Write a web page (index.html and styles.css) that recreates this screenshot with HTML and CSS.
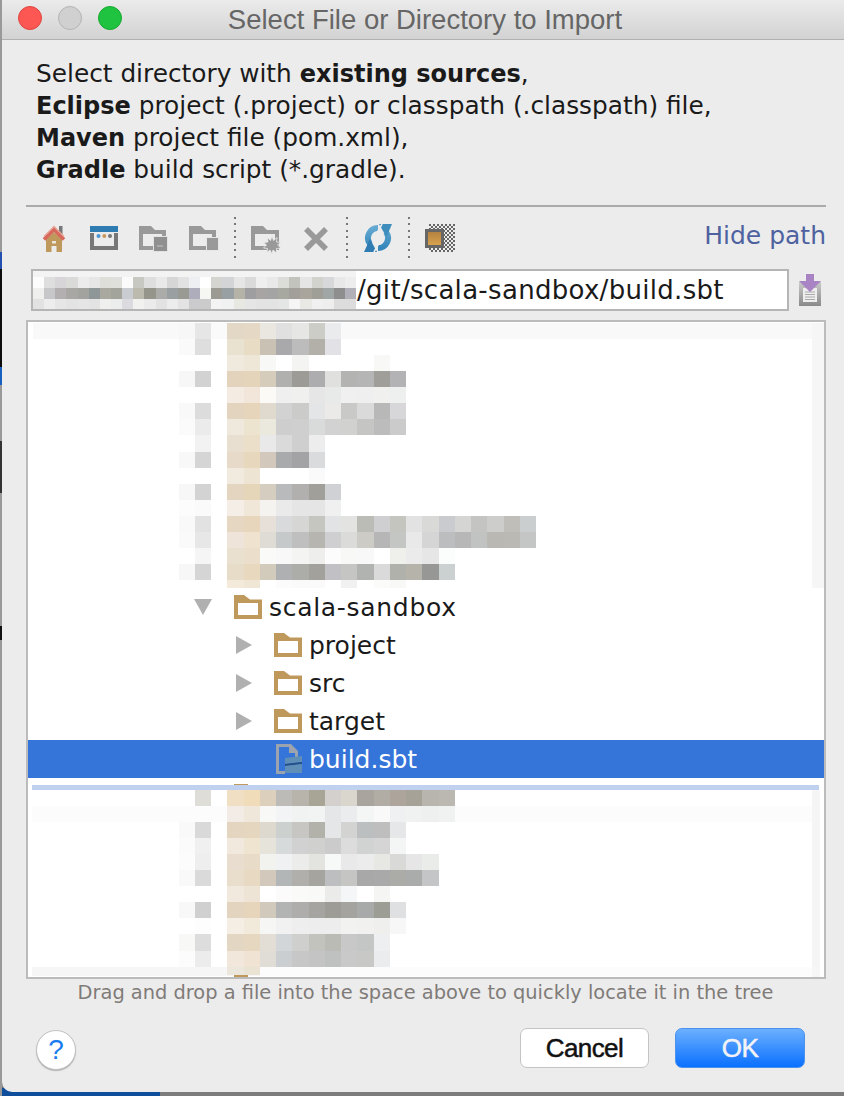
FILE: index.html
```html
<!DOCTYPE html>
<html lang="en">
<head>
    <meta charset="UTF-8">
    <title>Select File or Directory to Import</title>
    <link rel="stylesheet" href="styles.css">
</head>
<body>

<div class="window">

    <header class="titlebar">
        <div class="lights">
            <span class="light red"></span>
            <span class="light gray"></span>
            <span class="light green"></span>
        </div>
        <h1>Select File or Directory to Import</h1>
    </header>

    <div class="intro">
        <p>Select directory with <b>existing sources</b>,</p>
        <p><b>Eclipse</b> project (.project) or classpath (.classpath) file,</p>
        <p><b>Maven</b> project file (pom.xml),</p>
        <p><b>Gradle</b> build script (*.gradle).</p>
    </div>

    <div class="rule"></div>

    <div class="toolbar">
        <svg class="tool" viewBox="0 0 30 30">
            <rect x="20" y="2" width="3.5" height="8" fill="#777"/>
            <path d="M7 15L15 8L23 15V28H17.5V22H12.5V28H7Z" fill="#bf995c"/>
            <rect x="13" y="17" width="4" height="2.5" fill="#ece6da"/>
            <path d="M5 15.5L15 5.5L25 15.5" fill="none" stroke="#d9685c" stroke-width="3.6"/>
            <path d="M5 12.5L15 2.5L25 12.5" fill="none" stroke="#e6a394" stroke-width="1.4"/>
        </svg>
        <svg class="tool" viewBox="0 0 30 30">
            <rect x="1" y="2" width="28" height="6" fill="#2f7cb3"/>
            <path d="M1 9H5V22H25V9H29V26H1Z" fill="#777"/>
            <circle cx="9.5" cy="12" r="2" fill="#4b94cf"/>
            <circle cx="15.3" cy="12" r="2" fill="#c8995a"/>
            <circle cx="21" cy="12" r="2" fill="#777"/>
        </svg>
        <svg class="tool" viewBox="0 0 30 30">
            <path fill-rule="evenodd" d="M0 2H12L16 6H27V26H0ZM4 10V22H23V10Z" fill="#999"/>
            <rect x="14.5" y="12.5" width="14" height="15" fill="#8f8f8f" stroke="#e2e2e2"/>
            <rect x="18" y="21" width="6" height="2" fill="#aaa"/>
        </svg>
        <svg class="tool" viewBox="0 0 30 30">
            <path fill-rule="evenodd" d="M0 2H12L16 6H27V26H0ZM4 10V22H23V10Z" fill="#999"/>
            <rect x="17.5" y="13.5" width="12" height="13" fill="#999" stroke="#e6e6e6"/>
        </svg>
        <span class="tool-sep"></span>
        <svg class="tool" viewBox="0 0 30 30">
            <path fill-rule="evenodd" d="M0 2H12L16 6H28V26H0ZM4 10V22H24V10Z" fill="#999"/>
            <path d="M21 12L22.5 16.5L26 13.5L25.5 18L30 18.5L26.5 21L30 24L25.5 24.5L25.5 29L22 26L21 30L19 26L16 28.5L16.5 24.5L12.5 24L15.5 21L12.5 18.5L17 18L16.5 13.5L19.5 16.5Z" fill="#999" stroke="#ececec" stroke-width=".8"/>
        </svg>
        <svg class="tool" viewBox="0 0 30 30">
            <path d="M5 5L25 25M25 5L5 25" stroke="#999" stroke-width="5.6" fill="none"/>
        </svg>
        <span class="tool-sep"></span>
        <svg class="tool" viewBox="0 0 30 30">
            <defs>
                <linearGradient id="sync" x1="0" y1="0" x2="0" y2="1">
                    <stop offset="0" stop-color="#63a9d2"/>
                    <stop offset="1" stop-color="#3586ba"/>
                </linearGradient>
            </defs>
            <path d="M15 4A10 10 0 0 0 7 20M15 24A10 10 0 0 0 23 8" fill="none" stroke="url(#sync)" stroke-width="6"/>
            <path d="M16 0H29L23.5 13Z" fill="#3f8dbd"/>
            <path d="M1 28L7 15L14 28Z" fill="#2f7cb3"/>
            <path d="M19 0L14 9M16 19L11 28" stroke="#ececec" stroke-width="1.6"/>
        </svg>
        <span class="tool-sep"></span>
        <svg class="tool" viewBox="0 0 30 30">
            <defs>
                <pattern id="checks" width="4" height="4" patternUnits="userSpaceOnUse">
                    <rect width="2" height="2" fill="#666"/>
                    <rect x="2" y="2" width="2" height="2" fill="#666"/>
                </pattern>
                <linearGradient id="amber" x1="0" y1="0" x2="0" y2="1">
                    <stop offset="0" stop-color="#b07f3e"/>
                    <stop offset="1" stop-color="#dba550"/>
                </linearGradient>
            </defs>
            <rect x="4" y="0" width="26" height="28" fill="url(#checks)"/>
            <rect x="1.5" y="6.5" width="16" height="16" fill="url(#amber)" stroke="#666" stroke-width="3"/>
        </svg>
        <a class="hide-path">Hide path</a>
    </div>

    <div class="path-row">
        <div class="path-field">
            <svg class="path-mosaic" viewBox="0 0 323 38" width="323" height="38" shape-rendering="crispEdges">
                <rect width="323" height="6" fill="#f3f3f3"/>
                <g transform="translate(0 6) scale(11.14 11)">
                    <g><rect x="0" fill="#fcfcfc"/><rect x="1" fill="#dedede"/><rect x="2" fill="#d8d5d8"/><rect x="3" fill="#dadad8"/><rect x="4" fill="#ececec"/><rect x="5" fill="#e6e6e6"/><rect x="6" fill="#dedfd9"/><rect x="7" fill="#dfe0dc"/><rect x="8" fill="#fbfbfb"/><rect x="9" fill="#c8c8c2"/><rect x="10" fill="#dedede"/><rect x="11" fill="#e9e9e9"/><rect x="12" fill="#d6d6d6"/><rect x="13" fill="#e2e2e2"/><rect x="14" fill="#eeeff2"/><rect x="15" fill="#ffffff"/><rect x="16" fill="#d4d4d0"/><rect x="17" fill="#d2d4d6"/><rect x="18" fill="#e6e6e6"/><rect x="19" fill="#dadada"/><rect x="20" fill="#efefef"/><rect x="21" fill="#e9e9e9"/><rect x="22" fill="#dcdcd8"/><rect x="23" fill="#c2c3bd"/><rect x="24" fill="#e5e5e5"/><rect x="25" fill="#d2d3cd"/><rect x="26" fill="#d6d8da"/><rect x="27" fill="#e8e8e8"/><rect x="28" fill="#ededed"/></g>
                    <g transform="translate(0 1)"><rect x="0" fill="#efefed"/><rect x="1" fill="#c7c7c9"/><rect x="2" fill="#b3afb0"/><rect x="3" fill="#a8a7a3"/><rect x="4" fill="#a2a29f"/><rect x="5" fill="#8f9698"/><rect x="6" fill="#aaa99f"/><rect x="7" fill="#a3a49c"/><rect x="8" fill="#c9ccd0"/><rect x="9" fill="#bcb9af"/><rect x="10" fill="#95958c"/><rect x="11" fill="#abaca9"/><rect x="12" fill="#9aa0a2"/><rect x="13" fill="#9a9a95"/><rect x="14" fill="#adadbb"/><rect x="15" fill="#f6f6f2"/><rect x="16" fill="#9b9b93"/><rect x="17" fill="#99a0a3"/><rect x="18" fill="#b5b2a8"/><rect x="19" fill="#9e9ea0"/><rect x="20" fill="#a8a4a3"/><rect x="21" fill="#a4a4a4"/><rect x="22" fill="#a7a89f"/><rect x="23" fill="#a29e9a"/><rect x="24" fill="#a9a49c"/><rect x="25" fill="#a09f97"/><rect x="26" fill="#a0a6a6"/><rect x="27" fill="#8e8e8e"/><rect x="28" fill="#b1b0b8"/></g>
                    <g transform="translate(0 2)"><rect x="0" fill="#e2e2e2"/><rect x="1" fill="#ededed"/><rect x="2" fill="#e6e6e6"/><rect x="3" fill="#e3e3e3"/><rect x="4" fill="#e5e5e5"/><rect x="5" fill="#e3e3e3"/><rect x="6" fill="#efefed"/><rect x="7" fill="#ebeded"/><rect x="8" fill="#dbdbdf"/><rect x="9" fill="#f1f1ef"/><rect x="10" fill="#ebebeb"/><rect x="11" fill="#e2e2e2"/><rect x="12" fill="#ececec"/><rect x="13" fill="#e3e3e3"/><rect x="14" fill="#cbcbcd"/><rect x="15" fill="#cbcbcb"/><rect x="16" fill="#f3f3f3"/><rect x="17" fill="#f0f1f1"/><rect x="18" fill="#e8e8e2"/><rect x="19" fill="#e5e5e5"/><rect x="20" fill="#e3e3e3"/><rect x="21" fill="#e3e3e3"/><rect x="22" fill="#e4e6e6"/><rect x="23" fill="#f5f5f5"/><rect x="24" fill="#e8e8e4"/><rect x="25" fill="#f0f0f0"/><rect x="26" fill="#eeeeee"/><rect x="27" fill="#dcdcdc"/><rect x="28" fill="#dcdcdc"/></g>
                </g>
            </svg>
            <span class="path-text">/git/scala-sandbox/build.sbt</span>
        </div>
        <svg class="path-icon" viewBox="0 0 24 32">
            <defs>
                <linearGradient id="tray" x1="0" y1="0" x2="0" y2="1">
                    <stop offset="0" stop-color="#c9c9c9"/>
                    <stop offset="1" stop-color="#8a8a8a"/>
                </linearGradient>
            </defs>
            <path d="M1 8H23V32H1Z" fill="url(#tray)"/>
            <path d="M5 14H19V28H5Z" fill="#eee"/>
            <path d="M7 18H17M7 20.5H17M7 23H17M7 25.5H17" stroke="#aaa"/>
            <path d="M8 0H16V7H23L12 18L1 7H8Z" fill="#a884c4"/>
        </svg>
    </div>

    <div class="tree">
        <svg class="mosaic mosaic-top" viewBox="0 0 796 266" width="796" height="266" shape-rendering="crispEdges">
            <rect x="5" y="1" width="780" height="16" fill="#f9f9f9"/>
            <rect x="784" y="1" width="12" height="265" fill="#f6f6f6"/>
            <g transform="translate(150.6 .7) scale(16.25 16.1)">
                <g><rect x="0" fill="#f7f7f7"/><rect x="1" fill="#e6e6e6"/><rect x="2" fill="#fafafa"/><rect x="3" fill="#e3d8c6"/><rect x="4" fill="#e5d9c5"/><rect x="5" fill="#eae6e0"/><rect x="6" fill="#e0e0e0"/><rect x="7" fill="#e6e6e4"/><rect x="8" fill="#cdcdc8"/><rect x="9" fill="#eaebed"/></g>
                <g transform="translate(0 1)"><rect x="0" fill="#fafafa"/><rect x="1" fill="#dedede"/><rect x="3" fill="#eae2d0"/><rect x="4" fill="#e8dcc4"/><rect x="5" fill="#c9c1b3"/><rect x="6" fill="#a9a9ab"/><rect x="7" fill="#bcbcbc"/><rect x="8" fill="#b2b0a9"/><rect x="9" fill="#e2e1e6"/></g>
                <g transform="translate(0 2)"><rect x="3" fill="#f0e9dd"/><rect x="4" fill="#eee6d6"/><rect x="5" fill="#f8f8f6"/><rect x="7" fill="#f4f4f2"/><rect x="12" fill="#f8f8f6"/></g>
                <g transform="translate(0 3)"><rect x="0" fill="#f7f7f7"/><rect x="1" fill="#d2d2d2"/><rect x="3" fill="#e3d3bc"/><rect x="4" fill="#e4d4b9"/><rect x="5" fill="#d6ccbc"/><rect x="6" fill="#b0b0ae"/><rect x="7" fill="#9c9b96"/><rect x="8" fill="#adadb0"/><rect x="9" fill="#e0e0de"/><rect x="10" fill="#b3b3b1"/><rect x="11" fill="#b5b5b5"/><rect x="12" fill="#9f9e99"/><rect x="13" fill="#b3b3b5"/></g>
                <g transform="translate(0 4)"><rect x="3" fill="#f4ece2"/><rect x="4" fill="#f1e6d9"/><rect x="5" fill="#fbfaf6"/><rect x="6" fill="#efefef"/><rect x="7" fill="#f0f0ee"/><rect x="8" fill="#e6e6e6"/><rect x="9" fill="#e8eaea"/><rect x="10" fill="#f0f0f0"/><rect x="11" fill="#efefef"/><rect x="12" fill="#f0f0ee"/><rect x="13" fill="#eeefef"/></g>
                <g transform="translate(0 5)"><rect x="0" fill="#f9f9f9"/><rect x="1" fill="#dcdcdc"/><rect x="3" fill="#e3d4bf"/><rect x="4" fill="#e6d5bb"/><rect x="5" fill="#dfdacd"/><rect x="6" fill="#d2d2d2"/><rect x="7" fill="#cbcbc9"/><rect x="8" fill="#e4e5e7"/><rect x="9" fill="#ebeae8"/><rect x="10" fill="#c9c9c7"/><rect x="11" fill="#dadada"/><rect x="12" fill="#b9b8b8"/><rect x="13" fill="#d7d7d9"/></g>
                <g transform="translate(0 6)"><rect x="0" fill="#fbfbfb"/><rect x="1" fill="#ebebeb"/><rect x="3" fill="#efe8dc"/><rect x="4" fill="#ede4d0"/><rect x="5" fill="#ebe8dd"/><rect x="6" fill="#cecece"/><rect x="7" fill="#cfcfcf"/><rect x="8" fill="#d9dbda"/><rect x="9" fill="#d2d2d2"/><rect x="10" fill="#d1d2d0"/><rect x="11" fill="#c5c5c3"/><rect x="12" fill="#bcbcbc"/><rect x="13" fill="#cbcbcb"/></g>
                <g transform="translate(0 7)"><rect x="1" fill="#f2f2f2"/><rect x="3" fill="#e9dfd0"/><rect x="4" fill="#ebdfc9"/><rect x="5" fill="#e9e9e9"/><rect x="6" fill="#dadada"/><rect x="7" fill="#cfcfcf"/><rect x="8" fill="#ededed"/></g>
                <g transform="translate(0 8)"><rect x="0" fill="#f8f8f8"/><rect x="1" fill="#d5d5d5"/><rect x="3" fill="#e7dac9"/><rect x="4" fill="#e7d7bd"/><rect x="5" fill="#d2c9bc"/><rect x="6" fill="#a9aaac"/><rect x="7" fill="#a3a3a5"/><rect x="8" fill="#dadbdd"/></g>
                <g transform="translate(0 9)"><rect x="3" fill="#f1eadf"/><rect x="4" fill="#ede4d3"/><rect x="8" fill="#fafafa"/></g>
                <g transform="translate(0 10)"><rect x="0" fill="#f7f7f7"/><rect x="1" fill="#d3d3d3"/><rect x="3" fill="#e3d5c0"/><rect x="4" fill="#e5d6b9"/><rect x="5" fill="#d5cdbf"/><rect x="6" fill="#b8babc"/><rect x="7" fill="#b1b0ae"/><rect x="8" fill="#a19f9a"/><rect x="9" fill="#d0d1d5"/></g>
                <g transform="translate(0 11)"><rect x="0" fill="#fcfcfc"/><rect x="1" fill="#fafafa"/><rect x="3" fill="#f5eee6"/><rect x="4" fill="#f0e7d9"/><rect x="5" fill="#f4f3ef"/><rect x="6" fill="#eaeaea"/><rect x="7" fill="#e5e5e5"/><rect x="8" fill="#e5e5e5"/><rect x="9" fill="#f0f0f0"/></g>
                <g transform="translate(0 12)"><rect x="0" fill="#f9f9f9"/><rect x="1" fill="#e2e2e2"/><rect x="3" fill="#e5d7c2"/><rect x="4" fill="#e7d6bb"/><rect x="5" fill="#e6e0d8"/><rect x="6" fill="#d8dadc"/><rect x="7" fill="#d6d6d4"/><rect x="8" fill="#c5c6c0"/><rect x="9" fill="#e2e3e5"/><rect x="10" fill="#e3e3e1"/><rect x="11" fill="#bbbcb5"/><rect x="12" fill="#cfcfd1"/><rect x="13" fill="#c4c5bf"/><rect x="14" fill="#e2e2e2"/><rect x="15" fill="#d9d9d7"/><rect x="16" fill="#cacbcf"/><rect x="17" fill="#d5d5d3"/><rect x="18" fill="#c4c4c2"/><rect x="19" fill="#cdcdcb"/><rect x="20" fill="#bfbeb9"/><rect x="21" fill="#cbcecf"/></g>
                <g transform="translate(0 13)"><rect x="0" fill="#fafafa"/><rect x="1" fill="#e7e7e7"/><rect x="3" fill="#efe4d9"/><rect x="4" fill="#efe2cf"/><rect x="5" fill="#dfdbd5"/><rect x="6" fill="#c5c9ca"/><rect x="7" fill="#bfbfbf"/><rect x="8" fill="#b6b5b0"/><rect x="9" fill="#cfcfd2"/><rect x="10" fill="#dbdcda"/><rect x="11" fill="#cccbc6"/><rect x="12" fill="#b7b6b7"/><rect x="13" fill="#c4c6c3"/><rect x="14" fill="#e9e9ea"/><rect x="15" fill="#d4d5d4"/><rect x="16" fill="#bcbdbf"/><rect x="17" fill="#b8b7b8"/><rect x="18" fill="#c1c2c2"/><rect x="19" fill="#b9b8b3"/><rect x="20" fill="#bab9b4"/><rect x="21" fill="#c4c6c6"/></g>
                <g transform="translate(0 14)"><rect x="1" fill="#f5f5f5"/><rect x="3" fill="#eae0d0"/><rect x="4" fill="#ebdfcb"/><rect x="5" fill="#fafaf8"/><rect x="6" fill="#f8f8f8"/><rect x="7" fill="#f4f4f2"/><rect x="8" fill="#eeeeec"/><rect x="9" fill="#fbfcfb"/><rect x="10" fill="#f8f8f6"/><rect x="11" fill="#f8f8f8"/><rect x="13" fill="#efefeb"/><rect x="14" fill="#ebebeb"/><rect x="15" fill="#e6e6e6"/><rect x="16" fill="#fbfdfc"/></g>
                <g transform="translate(0 15)"><rect x="0" fill="#f7f7f7"/><rect x="1" fill="#d5d5d5"/><rect x="3" fill="#e7dcc7"/><rect x="4" fill="#e8d8bd"/><rect x="5" fill="#d2cabb"/><rect x="6" fill="#afb0b2"/><rect x="7" fill="#acaca8"/><rect x="8" fill="#a2a19c"/><rect x="9" fill="#c1c1c5"/><rect x="10" fill="#c5c6c3"/><rect x="11" fill="#b1b3b0"/><rect x="12" fill="#dadada"/><rect x="13" fill="#b0b1aa"/><rect x="14" fill="#b6b3ab"/><rect x="15" fill="#979796"/><rect x="16" fill="#cbd0d0"/></g>
                <g transform="translate(0 16)" class="short"><rect x="3" fill="#f3eadc"/><rect x="4" fill="#efe6d6"/><rect x="6" fill="#fbfbfb"/><rect x="7" fill="#fafafa"/><rect x="8" fill="#fafafa"/><rect x="10" fill="#f1f1f1"/><rect x="12" fill="#fbfbf9"/><rect x="13" fill="#f8f8f6"/></g>
            </g>
        </svg>

        <div class="row row-parent">
            <svg class="arrow-down" viewBox="0 0 18 16"><path d="M0 0H18L9 16Z"/></svg>
            <svg class="folder" viewBox="0 0 28 24"><use href="#folder-shape"/></svg>
            <span>scala-sandbox</span>
        </div>
        <div class="row row-child">
            <svg class="arrow-right" viewBox="0 0 16 18"><path d="M0 0L16 9L0 18Z"/></svg>
            <svg class="folder" viewBox="0 0 28 24"><use href="#folder-shape"/></svg>
            <span>project</span>
        </div>
        <div class="row row-child">
            <svg class="arrow-right" viewBox="0 0 16 18"><path d="M0 0L16 9L0 18Z"/></svg>
            <svg class="folder" viewBox="0 0 28 24"><use href="#folder-shape"/></svg>
            <span>src</span>
        </div>
        <div class="row row-child">
            <svg class="arrow-right" viewBox="0 0 16 18"><path d="M0 0L16 9L0 18Z"/></svg>
            <svg class="folder" viewBox="0 0 28 24"><use href="#folder-shape"/></svg>
            <span>target</span>
        </div>
        <div class="row row-file selected">
            <svg class="file-icon" viewBox="0 0 26 30">
                <path fill-rule="evenodd" d="M0 0H15L22 7V14H19V9H13V3H3V27H9V30H0Z" fill="#9aa3ae"/>
                <path d="M9 14L26 12V18L9 20Z" fill="#5f8fb6"/>
                <path d="M9 20L26 18V20L9 22Z" fill="#264f86"/>
                <path d="M9 22L26 20V29H9Z" fill="#5f8fb6"/>
            </svg>
            <span>build.sbt</span>
        </div>

        <svg class="mosaic mosaic-bottom" viewBox="0 0 796 199" width="796" height="199" shape-rendering="crispEdges">
            <rect x="206" y="6" width="14" height="1" fill="#bf995c"/>
            <rect x="4" y="7" width="787" height="5" fill="#c0d1f0"/>
            <rect x="784" y="12" width="8" height="187" fill="#f5f5f5"/>
            <rect x="4" y="28" width="780" height="16" fill="#fcfcfd"/>
            <rect x="4" y="189" width="788" height="9" fill="#f6f6f6"/>
            <g transform="translate(150.6 12) scale(16.25 16.05)">
                <g><rect x="1" fill="#dfddd8"/><rect x="3" fill="#f0dfc3"/><rect x="4" fill="#f1dcba"/><rect x="5" fill="#dccfbc"/><rect x="6" fill="#bcbbb7"/><rect x="7" fill="#b9b4ab"/><rect x="8" fill="#a8a596"/><rect x="9" fill="#d4d0cd"/><rect x="10" fill="#dad5cd"/><rect x="11" fill="#a9a59e"/><rect x="12" fill="#b1ada5"/><rect x="13" fill="#ada59c"/><rect x="14" fill="#a7a298"/><rect x="15" fill="#b7b5ae"/><rect x="16" fill="#bbb8b1"/></g>
                <g transform="translate(0 1)"><rect x="3" fill="#f3ece6"/><rect x="4" fill="#efe7da"/><rect x="5" fill="#f8f8f6"/><rect x="6" fill="#f3f4f5"/><rect x="7" fill="#f1f2f2"/><rect x="8" fill="#f2f3f3"/><rect x="9" fill="#e5e6e7"/><rect x="10" fill="#ebecee"/><rect x="11" fill="#f4f5f5"/><rect x="12" fill="#f9f9f9"/><rect x="13" fill="#eff0f1"/><rect x="14" fill="#f0f1f1"/><rect x="15" fill="#eef0f0"/><rect x="16" fill="#f0f1f1"/></g>
                <g transform="translate(0 2)"><rect x="0" fill="#f9f9f9"/><rect x="1" fill="#d9d9d9"/><rect x="3" fill="#e4d5c0"/><rect x="4" fill="#e5d6bf"/><rect x="5" fill="#ded9cf"/><rect x="6" fill="#ccd0cf"/><rect x="7" fill="#c7c6c2"/><rect x="8" fill="#b2b1aa"/><rect x="9" fill="#e5e6e8"/><rect x="10" fill="#d3d3d1"/><rect x="11" fill="#bcbfbf"/><rect x="12" fill="#bebebe"/><rect x="13" fill="#e6e7e9"/></g>
                <g transform="translate(0 3)"><rect x="0" fill="#fbfbfb"/><rect x="1" fill="#f0f0f0"/><rect x="3" fill="#f1e9dd"/><rect x="4" fill="#eee4d0"/><rect x="5" fill="#e6e3da"/><rect x="6" fill="#d7dada"/><rect x="7" fill="#d2d1d2"/><rect x="8" fill="#d0d0ce"/><rect x="9" fill="#cbcbcb"/><rect x="10" fill="#dcdcdc"/><rect x="11" fill="#d1d3d3"/><rect x="12" fill="#d5d5d5"/><rect x="13" fill="#f4f6f5"/></g>
                <g transform="translate(0 4)"><rect x="0" fill="#fcfcfc"/><rect x="1" fill="#eeeeee"/><rect x="3" fill="#e8ddce"/><rect x="4" fill="#e8dcc9"/><rect x="5" fill="#f2f2ee"/><rect x="6" fill="#eff1f2"/><rect x="7" fill="#ecedeb"/><rect x="8" fill="#e3e4df"/><rect x="9" fill="#f7f8f8"/><rect x="10" fill="#e9e9e9"/><rect x="11" fill="#ececec"/><rect x="12" fill="#e7e7e3"/><rect x="13" fill="#d9d9d7"/><rect x="14" fill="#e5e6e5"/><rect x="15" fill="#eaecea"/></g>
                <g transform="translate(0 5)"><rect x="0" fill="#f9f9f9"/><rect x="1" fill="#dadada"/><rect x="3" fill="#e9ddcb"/><rect x="4" fill="#e8d9c2"/><rect x="5" fill="#d2c9bc"/><rect x="6" fill="#b3b6b6"/><rect x="7" fill="#b0afac"/><rect x="8" fill="#a5a49f"/><rect x="9" fill="#bdbec0"/><rect x="10" fill="#c5c5c3"/><rect x="11" fill="#a8a8a8"/><rect x="12" fill="#a9a9a9"/><rect x="13" fill="#ababa8"/><rect x="14" fill="#a9acab"/><rect x="15" fill="#c3c5c7"/></g>
                <g transform="translate(0 6)"><rect x="3" fill="#f1e9dd"/><rect x="4" fill="#eee4d6"/><rect x="6" fill="#fbfbfb"/><rect x="7" fill="#fafaf8"/><rect x="8" fill="#f9f9f7"/><rect x="9" fill="#ebebe9"/><rect x="10" fill="#f5f6f8"/><rect x="12" fill="#f5f5f3"/></g>
                <g transform="translate(0 7)"><rect x="0" fill="#f8f8f8"/><rect x="1" fill="#d0d0d0"/><rect x="3" fill="#e3d4c0"/><rect x="4" fill="#e6d5ba"/><rect x="5" fill="#d1cabc"/><rect x="6" fill="#b1b4b3"/><rect x="7" fill="#aeadab"/><rect x="8" fill="#a5a4a0"/><rect x="9" fill="#9d9c97"/><rect x="10" fill="#a4a3a0"/><rect x="11" fill="#a8aaa9"/><rect x="12" fill="#9c9d94"/><rect x="13" fill="#dfe0e2"/></g>
                <g transform="translate(0 8)"><rect x="1" fill="#fdfdfd"/><rect x="3" fill="#f5eee5"/><rect x="4" fill="#f1e9da"/><rect x="5" fill="#f6f6f4"/><rect x="6" fill="#f1f1f1"/><rect x="7" fill="#eeeeee"/><rect x="8" fill="#ededed"/><rect x="9" fill="#ededed"/><rect x="10" fill="#f2f3f1"/><rect x="11" fill="#f1f1ef"/><rect x="12" fill="#efefed"/><rect x="13" fill="#f7f7f7"/></g>
                <g transform="translate(0 9)"><rect x="0" fill="#f8f8f6"/><rect x="1" fill="#dddddd"/><rect x="3" fill="#e3d6c3"/><rect x="4" fill="#e6d7c1"/><rect x="5" fill="#e2ddd5"/><rect x="6" fill="#d3d6d9"/><rect x="7" fill="#cfcfcd"/><rect x="8" fill="#c3c3bd"/><rect x="9" fill="#bbbbb6"/><rect x="10" fill="#c7c8c7"/><rect x="11" fill="#c3c6c5"/><rect x="12" fill="#edeff1"/></g>
                <g transform="translate(0 10)"><rect x="0" fill="#fcfcfc"/><rect x="1" fill="#ececec"/><rect x="3" fill="#f1e7db"/><rect x="4" fill="#f0e3d3"/><rect x="5" fill="#e0ddd6"/><rect x="6" fill="#cbced0"/><rect x="7" fill="#c7c7c7"/><rect x="8" fill="#c4c4c4"/><rect x="9" fill="#bfc0c0"/><rect x="10" fill="#c9c9c9"/><rect x="11" fill="#c8c8c6"/><rect x="12" fill="#ebecee"/></g>
                <g transform="translate(0 11)" class="short"><rect x="3" fill="#ebe7dc"/><rect x="4" fill="#eae3d4"/></g>
            </g>
            <rect x="232" y="189" width="552" height="9" fill="#fcfcfc"/>
            <rect x="206" y="197" width="14" height="2" fill="#bf995c"/>
        </svg>
    </div>

    <p class="hint">Drag and drop a file into the space above to quickly locate it in the tree</p>

    <footer class="footer">
        <button type="button" class="help">?</button>
        <div class="actions">
            <button type="button" class="btn btn-cancel">Cancel</button>
            <button type="button" class="btn btn-primary">OK</button>
        </div>
    </footer>

</div>

<svg class="defs-only" width="0" height="0">
    <defs>
        <path id="folder-shape" fill-rule="evenodd" fill="#bf995c" d="M0 0H10L16 4.5H28V24H0ZM4 8V20H24V8Z"/>
    </defs>
</svg>

</body>
</html>
```

FILE: styles.css
```css
html, body {
    margin: 0;
    padding: 0;
}

body {
    width: 844px;
    height: 1096px;
    overflow: hidden;
    font-family: "DejaVu Sans", sans-serif;
    color: #1a1a1a;
    background-color: #777;
    background-image:
        linear-gradient(to bottom, #999 0, #999 252px, #2350b0 252px, #2350b0 269px, #0c0c0c 269px, #0c0c0c 367px, #1560c0 367px, #1560c0 385px, #999 385px, #999 441px, #333 441px, #333 493px, #999 493px, #999 626px, #111 626px, #111 640px, #999 640px, #999 1096px),
        linear-gradient(to right, #0e4e9a 0, #0e4e9a 160px, #7c7c7c 160px, #7c7c7c 844px);
    background-size: 2px 100%, 100% 8px;
    background-position: 0 0, 0 100%;
    background-repeat: no-repeat;
}

p, h1 {
    margin: 0;
}

.window {
    width: 842px;
    height: 1092px;
    margin-left: 2px;
    background-color: #ececec;
    border-bottom-left-radius: 10px;
    overflow: hidden;
    display: flex;
    flex-direction: column;
}

.titlebar {
    height: 39px;
    flex: none;
    position: relative;
    display: flex;
    align-items: center;
    justify-content: center;
    padding-left: 4px;
    background: linear-gradient(to bottom, #ebebeb, #d2d2d2);
    border-bottom: 1px solid #b1b1b1;
}

.titlebar h1 {
    font-family: "Liberation Sans", Arial, sans-serif;
    font-weight: normal;
    font-size: 27.5px;
    color: #666;
}

.lights {
    position: absolute;
    left: 16px;
    top: 6px;
    display: flex;
    gap: 16px;
}

.light {
    width: 24px;
    height: 24px;
    border-radius: 50%;
    box-sizing: border-box;
}

.light.red { background-color: #fc5753; border: 1px solid #e0443e; }
.light.gray { background-color: #d0d0d0; border: 1px solid #b4b4b4; }
.light.green { background-color: #1fc33f; border: 1px solid #17a92f; }

.intro {
    padding: 18px 0 0 34px;
    font-size: 24.8px;
    line-height: 32px;
    height: 147px;
    flex: none;
}

.intro b {
    font-size: 24px;
}

.rule {
    height: 2px;
    margin-left: 24px;
    width: 800px;
    background-color: #aaa;
    flex: none;
}

.toolbar {
    display: flex;
    align-items: center;
    gap: 20px;
    height: 43px;
    margin-top: 10px;
    padding: 0 18px 0 37px;
    flex: none;
}

.tool {
    width: 30px;
    height: 30px;
    flex: none;
}

.tool-sep {
    width: 2px;
    height: 44px;
    margin: 0 -5px;
    flex: none;
    background-image: repeating-linear-gradient(to bottom, #777 0, #777 2px, transparent 2px, transparent 6.5px);
}

.hide-path {
    margin-left: auto;
    padding-bottom: 7px;
    font-size: 25px;
    color: #4f62a0;
}

.path-row {
    display: flex;
    align-items: center;
    height: 42px;
    margin-top: 9px;
    padding-left: 29px;
    flex: none;
}

.path-field {
    width: 758px;
    height: 42px;
    box-sizing: border-box;
    border: 2px solid #b5b5b5;
    background-color: #fff;
    display: flex;
    align-items: center;
    flex: none;
}

.path-mosaic {
    flex: none;
    display: block;
}

.path-mosaic g rect {
    width: 1px;
    height: 1px;
}

.path-text {
    font-size: 26px;
    letter-spacing: .3px;
    margin-left: 1px;
    white-space: nowrap;
}

.path-icon {
    width: 24px;
    height: 32px;
    margin-left: 9px;
    flex: none;
}

.tree {
    width: 800px;
    height: 659px;
    box-sizing: border-box;
    margin: 9px 0 0 24px;
    border: 2px solid #bbb;
    background-color: #fff;
    flex: none;
    overflow: hidden;
}

.mosaic {
    display: block;
}

.mosaic g rect {
    width: 1px;
    height: 1px;
}

.mosaic g.short rect {
    height: .55px;
}

.row {
    height: 38px;
    display: flex;
    align-items: center;
    font-size: 25px;
    white-space: nowrap;
}

.row-parent {
    padding-left: 166px;
    letter-spacing: .7px;
}

.row-child { padding-left: 208px; }
.row-file { padding-left: 248px; }

.selected {
    background-color: #3574d9;
    color: #fff;
}

.arrow-down {
    width: 18px;
    height: 16px;
    margin-right: 22px;
    fill: #b0b0b0;
    flex: none;
}

.arrow-right {
    width: 16px;
    height: 18px;
    margin-right: 22px;
    fill: #b0b0b0;
    flex: none;
}

.folder {
    width: 28px;
    height: 24px;
    margin-right: 7px;
    flex: none;
}

.file-icon {
    width: 26px;
    height: 30px;
    margin-right: 7px;
    flex: none;
}

.hint {
    padding-left: 5px;
    text-align: center;
    font-size: 19.4px;
    line-height: 28px;
    color: #7f7b78;
    flex: none;
}

.footer {
    display: flex;
    align-items: flex-start;
    justify-content: space-between;
    padding: 21px 39px 0 34px;
    flex: none;
}

.help {
    width: 40px;
    height: 40px;
    margin-top: 2px;
    padding: 0;
    border: 1px solid #c2c2c2;
    border-radius: 50%;
    background-color: #fff;
    box-shadow: 0 1px 1px rgba(0, 0, 0, .25);
    font-family: "Liberation Sans", Arial, sans-serif;
    font-size: 28px;
    color: #1a7cf0;
}

.actions {
    display: flex;
    gap: 26px;
}

.btn {
    width: 130px;
    height: 40px;
    padding: 0;
    border: 1px solid #c4c4c4;
    border-radius: 7px;
    background-color: #fff;
    font-family: "Liberation Sans", Arial, sans-serif;
    font-size: 26px;
    -webkit-text-stroke: .5px currentColor;
    letter-spacing: -.6px;
    color: #111;
}

.btn-cancel {
    width: 129px;
}

.btn-primary {
    border: 1px solid #4a92ef;
    background: linear-gradient(to bottom, #6cb0ff, #0a70ff);
    color: #f3f3f6;
}

.defs-only {
    position: absolute;
}
```
